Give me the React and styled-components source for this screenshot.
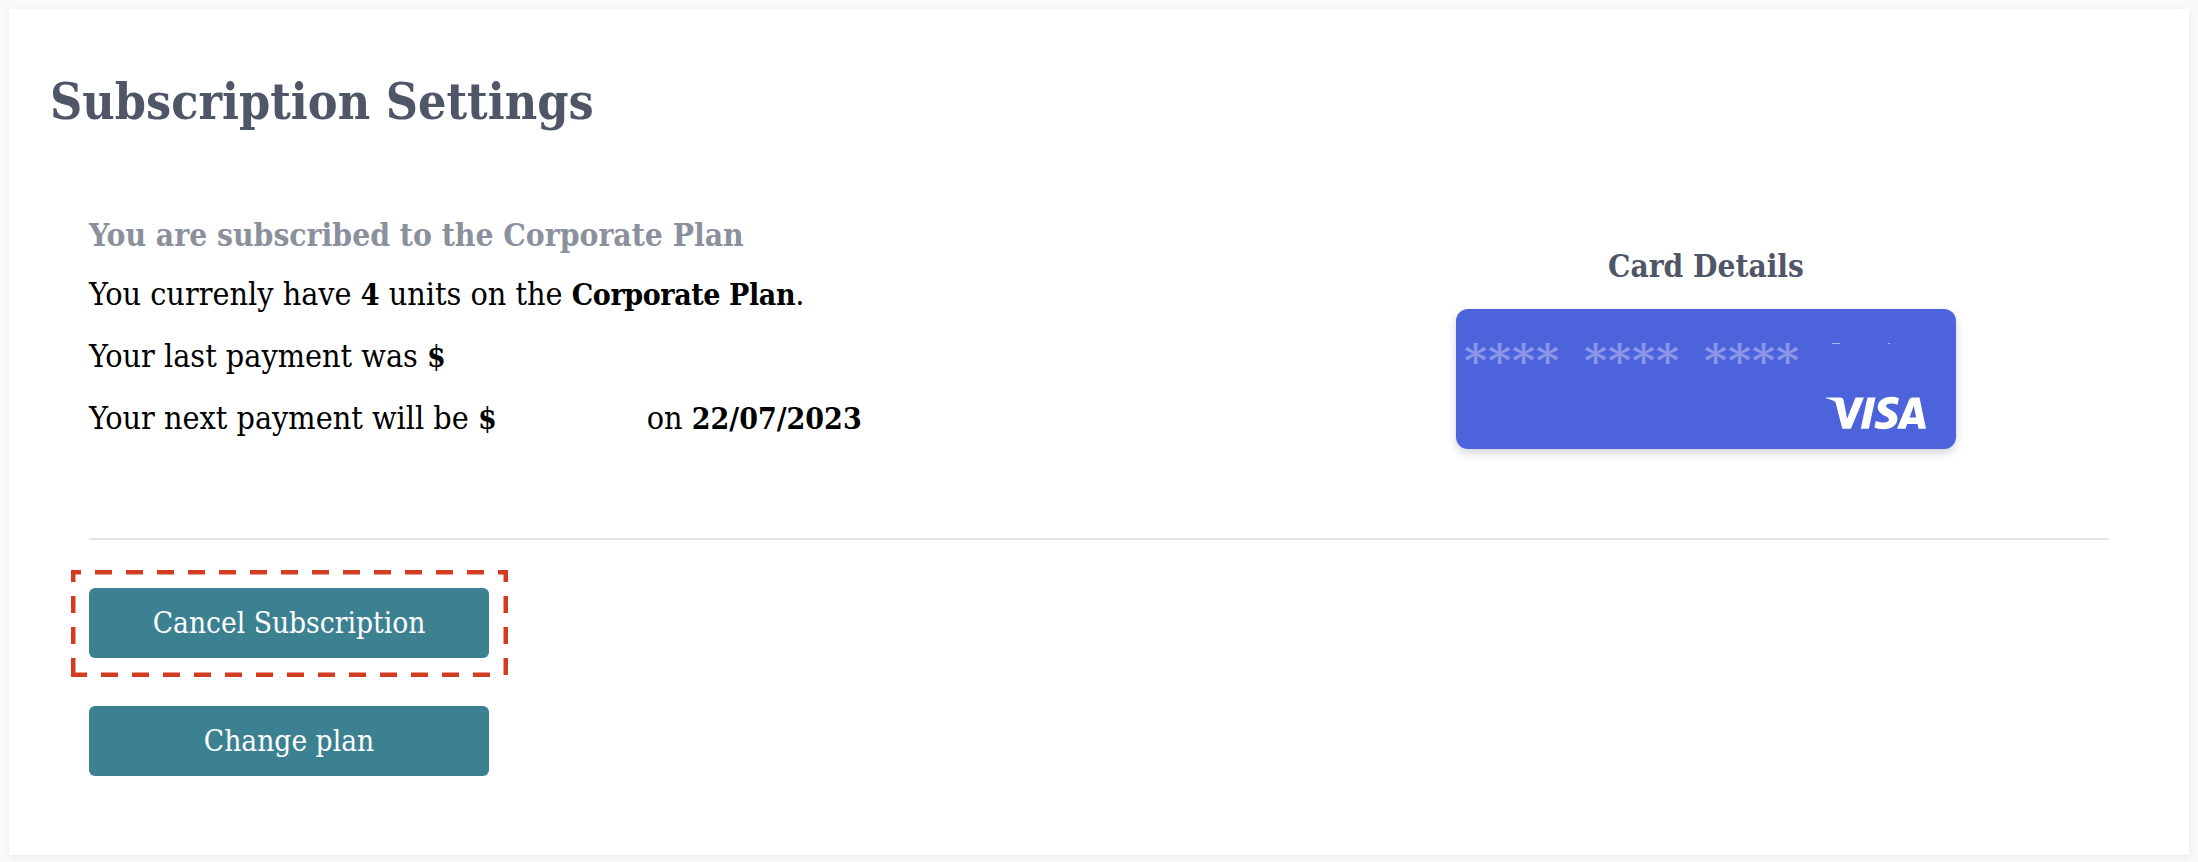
import React from "react";
import styled, { createGlobalStyle } from "styled-components";
import { SiVisa } from "react-icons/si";

const GlobalStyle = createGlobalStyle`
  html, body {
    margin: 0;
    background: #fafafa;
  }
  body {
    font-family: "DejaVu Serif", "Liberation Serif", serif;
    font-stretch: condensed;
  }
`;

const Page = styled.div`
  box-sizing: border-box;
  width: 2198px;
  height: 862px;
  padding: 9px;
`;

const Panel = styled.main`
  box-sizing: border-box;
  width: 2180px;
  height: 846px;
  padding: 63px 80px 0 41px;
  background: #fff;
  box-shadow: 0 2px 8px rgba(0, 0, 0, 0.07);
`;

const Heading = styled.h1`
  margin: 0;
  font-size: 49.7px;
  line-height: 60px;
  font-weight: 700;
  color: #4f5668;
`;

const Body = styled.div`
  padding-left: 39px;
`;

const Summary = styled.section`
  display: flex;
  justify-content: space-between;
  height: 406px;
  padding-top: 80px;
  box-sizing: border-box;
`;

const Plan = styled.div`
  display: flex;
  flex-direction: column;
`;

const PlanTitle = styled.h2`
  margin: 0 0 13px;
  font-size: 31.5px;
  line-height: 46px;
  font-weight: 700;
  color: #8a919c;
`;

const Line = styled.p`
  margin: 0 0 15px;
  font-size: 32px;
  line-height: 46px;
  color: #000;
`;

const Emphasis = styled.strong`
  font-size: 30px;
  font-weight: 700;
  letter-spacing: ${(p) => (p.$tight ? "-0.4px" : "0")};
`;

const Redacted = styled.span`
  display: inline-block;
  width: ${(p) => p.$width}px;
`;

const CardColumn = styled.div`
  display: flex;
  flex-direction: column;
  align-items: center;
  width: 500px;
  margin-right: 153px;
  padding-top: 34px;
`;

const CardTitle = styled.h3`
  margin: 0 0 23px;
  font-size: 31.3px;
  line-height: 40px;
  font-weight: 700;
  color: #4f5668;
`;

const CreditCard = styled.div`
  position: relative;
  display: flex;
  flex-direction: column;
  justify-content: space-between;
  flex: none;
  box-sizing: border-box;
  width: 500px;
  height: 140px;
  padding: 33px 30px 20px 8px;
  border-radius: 12px;
  background: #4d63dc;
  box-shadow: 0 4px 10px rgba(30, 40, 90, 0.2);
`;

const CardNumber = styled.div`
  display: flex;
  gap: 24px;
`;

const Stars = styled.span`
  font-weight: 700;
  font-stretch: normal;
  font-size: 44px;
  line-height: 40px;
  letter-spacing: 1px;
  color: #8c96e6;
`;

const Residue = styled.span`
  position: absolute;
  top: 34px;
  left: ${(p) => p.$left}px;
  width: ${(p) => p.$width}px;
  height: 1px;
  background: #aab4f0;
`;

const VisaMark = styled.div`
  display: flex;
  justify-content: flex-end;
  height: 32px;
  align-items: center;
  color: #fff;
  filter: blur(0.5px);
`;

const Divider = styled.hr`
  height: 2px;
  margin: 0;
  border: 0;
  background: #e3e3e3;
`;

const Actions = styled.div`
  display: flex;
  flex-direction: column;
  align-items: flex-start;
  gap: 48px;
  padding-top: 48px;
`;

const ButtonWrap = styled.div`
  position: relative;
`;

const Button = styled.button`
  display: block;
  width: 400px;
  height: 70px;
  padding: 0;
  border: 0;
  border-radius: 6px;
  background: #3c8191;
  color: #fff;
  font-family: inherit;
  font-stretch: inherit;
  font-size: 29.6px;
`;

const Highlight = styled.svg`
  position: absolute;
  left: -18px;
  top: -18px;
  width: 437px;
  height: 107px;
  fill: none;
  stroke: #d23c20;
  stroke-width: 4.5;
  stroke-dasharray: 17 14;
`;

const highlightSides = [
  { x1: 0, y1: 2.25, x2: 437, y2: 2.25, offset: 7 },
  { x1: 0, y1: 104.75, x2: 420, y2: 104.75, offset: 1 },
  { x1: 2.25, y1: 0, x2: 2.25, y2: 107, offset: 5 },
  { x1: 434.75, y1: 0, x2: 434.75, y2: 107, offset: 5 },
];

export default function App() {
  return (
    <Page>
      <GlobalStyle />
      <Panel>
        <Heading>Subscription Settings</Heading>
        <Body>
          <Summary>
            <Plan>
              <PlanTitle>You are subscribed to the Corporate Plan</PlanTitle>
              <Line>
                You currenly have <Emphasis>4</Emphasis> units on the{" "}
                <Emphasis $tight>Corporate Plan</Emphasis>.
              </Line>
              <Line>
                Your last payment was <Emphasis>$</Emphasis>
              </Line>
              <Line>
                Your next payment will be <Emphasis>$</Emphasis>
                <Redacted $width={150} />
                on <Emphasis>22/07/2023</Emphasis>
              </Line>
            </Plan>
            <CardColumn>
              <CardTitle>Card Details</CardTitle>
              <CreditCard>
                <CardNumber>
                  <Stars>****</Stars>
                  <Stars>****</Stars>
                  <Stars>****</Stars>
                </CardNumber>
                <Residue $left={376} $width={8} />
                <Residue $left={432} $width={2} />
                <VisaMark>
                  <SiVisa size={100} />
                </VisaMark>
              </CreditCard>
            </CardColumn>
          </Summary>
          <Divider />
          <Actions>
            <ButtonWrap>
              <Button>Cancel Subscription</Button>
              <Highlight viewBox="0 0 437 107">
                {highlightSides.map((side) => (
                  <line
                    key={`${side.x1}-${side.y1}`}
                    x1={side.x1}
                    y1={side.y1}
                    x2={side.x2}
                    y2={side.y2}
                    strokeDashoffset={side.offset}
                  />
                ))}
              </Highlight>
            </ButtonWrap>
            <Button>Change plan</Button>
          </Actions>
        </Body>
      </Panel>
    </Page>
  );
}
